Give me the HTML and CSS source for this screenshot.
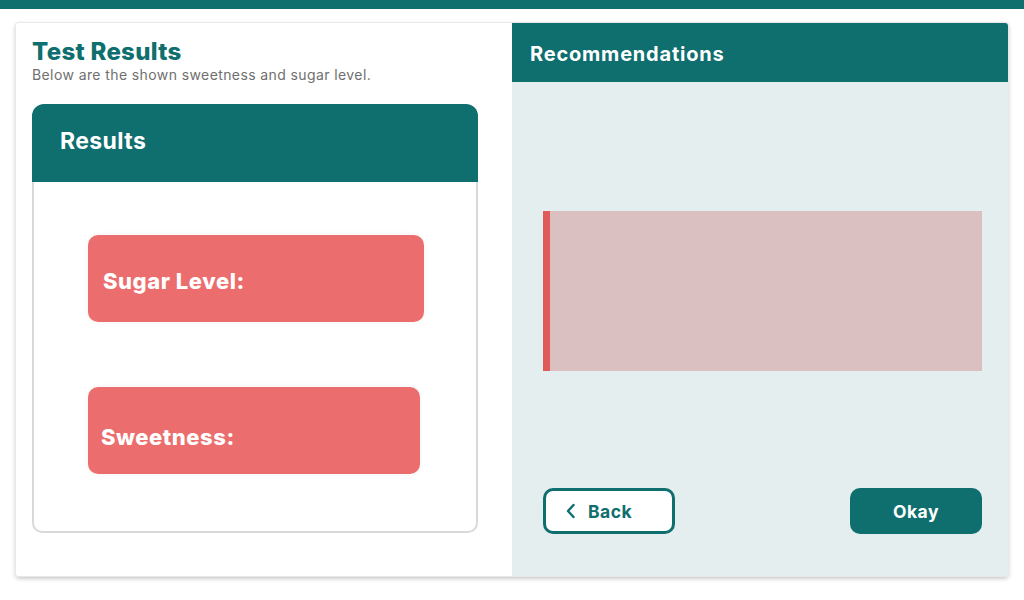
FILE: index.html
```html
<!DOCTYPE html>
<html>
<head>
<meta charset="utf-8">
<link rel="stylesheet" href="styles.css">
</head>
<body>
<div class="topbar"></div>
<main class="page">
  <div class="card">
    <section class="left">
      <h1 class="title">Test Results</h1>
      <p class="subtitle">Below are the shown sweetness and sugar level.</p>
      <div class="results">
        <div class="results-head">Results</div>
        <div class="results-body">
          <div class="metric metric-sugar">Sugar Level:</div>
          <div class="metric metric-sweet">Sweetness:</div>
        </div>
      </div>
    </section>
    <section class="right">
      <div class="rec-head">Recommendations</div>
      <div class="rec-body">
        <div class="alert"></div>
        <div class="actions">
          <button class="btn btn-back">
            <svg width="12" height="16" viewBox="0 0 12 16"><path d="M8.5 2 L3 8 L8.5 14" fill="none" stroke="#0f6e6e" stroke-width="2.4" stroke-linecap="round" stroke-linejoin="round"/></svg>
            <span>Back</span>
          </button>
          <button class="btn btn-okay">Okay</button>
        </div>
      </div>
    </section>
  </div>
</main>
</body>
</html>
```
FILE: styles.css
```css
* { box-sizing: border-box; }
html, body { margin: 0; padding: 0; }
body {
  width: 1024px;
  height: 600px;
  background: #ffffff;
  font-family: Inter, "Open Sans", sans-serif;
  overflow: hidden;
}
.topbar {
  height: 9px;
  background: #0f6e6e;
}
.page {
  padding: 14px 16px 0 16px;
}
.card {
  display: grid;
  grid-template-columns: 496px 496px;
  height: 553px;
  border-radius: 3px;
  box-shadow: 0 0 0 1px #e8e8e8, 0 2px 5px rgba(0,0,0,0.28);
  overflow: hidden;
}
.left {
  background: #ffffff;
  padding: 14px 34px 0 16px;
  display: flex;
  flex-direction: column;
}
.title {
  margin: 0;
  color: #0f6e6e;
  font-size: 24px;
  font-weight: 800;
  line-height: 29px;
  letter-spacing: 0.3px;
}
.subtitle {
  margin: 0;
  color: #6f6f6f;
  font-size: 14px;
  line-height: 18px;
  letter-spacing: 0.4px;
}
.results {
  margin-top: 20px;
  height: 429px;
  display: flex;
  flex-direction: column;
}
.results-head {
  height: 78px;
  background: #0f6e6e;
  border-radius: 12px 12px 0 0;
  color: #ffffff;
  font-size: 23px;
  font-weight: 700;
  letter-spacing: 0.4px;
  padding: 0 0 5px 28px;
  display: flex;
  align-items: center;
}
.results-body {
  flex: 1;
  border: 2px solid #d9d9d9;
  border-top: none;
  border-radius: 0 0 10px 10px;
  padding: 53px 0 0 54px;
  display: flex;
  flex-direction: column;
  gap: 65px;
}
.metric {
  height: 87px;
  background: #ec6d6d;
  border-radius: 10px;
  color: #ffffff;
  font-size: 22px;
  font-weight: 800;
  display: flex;
  align-items: center;
  box-shadow: 0 0 6px rgba(0,0,0,0.05);
  letter-spacing: 0.55px;
}
.metric-sugar { width: 336px; padding: 5px 0 0 15px; }
.metric-sweet { width: 332px; padding: 12px 0 0 13px; }
.right {
  background: #e5eeef;
  display: flex;
  flex-direction: column;
}
.rec-head {
  height: 59px;
  background: #0f6e6e;
  color: #ffffff;
  font-size: 20px;
  font-weight: 700;
  letter-spacing: 0.8px;
  padding: 3px 0 0 18px;
  display: flex;
  align-items: center;
}
.rec-body {
  flex: 1;
  padding: 129px 26px 42px 31px;
  display: flex;
  flex-direction: column;
}
.alert {
  height: 160px;
  background: #dbc0c2;
  border-left: 7px solid #e05a5a;
}
.actions {
  margin-top: auto;
  display: flex;
  justify-content: space-between;
}
.btn {
  width: 132px;
  height: 46px;
  border-radius: 10px;
  font-family: Inter, "Open Sans", sans-serif;
  font-size: 17.5px;
  font-weight: 700;
  letter-spacing: 0.5px;
  cursor: pointer;
}
.btn-back {
  background: #ffffff;
  border: 3px solid #0f6e6e;
  color: #0f6e6e;
  display: flex;
  align-items: center;
  padding: 0 0 0 19px;
  gap: 11px;
}
.btn-okay {
  background: #0f6e6e;
  border: none;
  color: #ffffff;
}
```
